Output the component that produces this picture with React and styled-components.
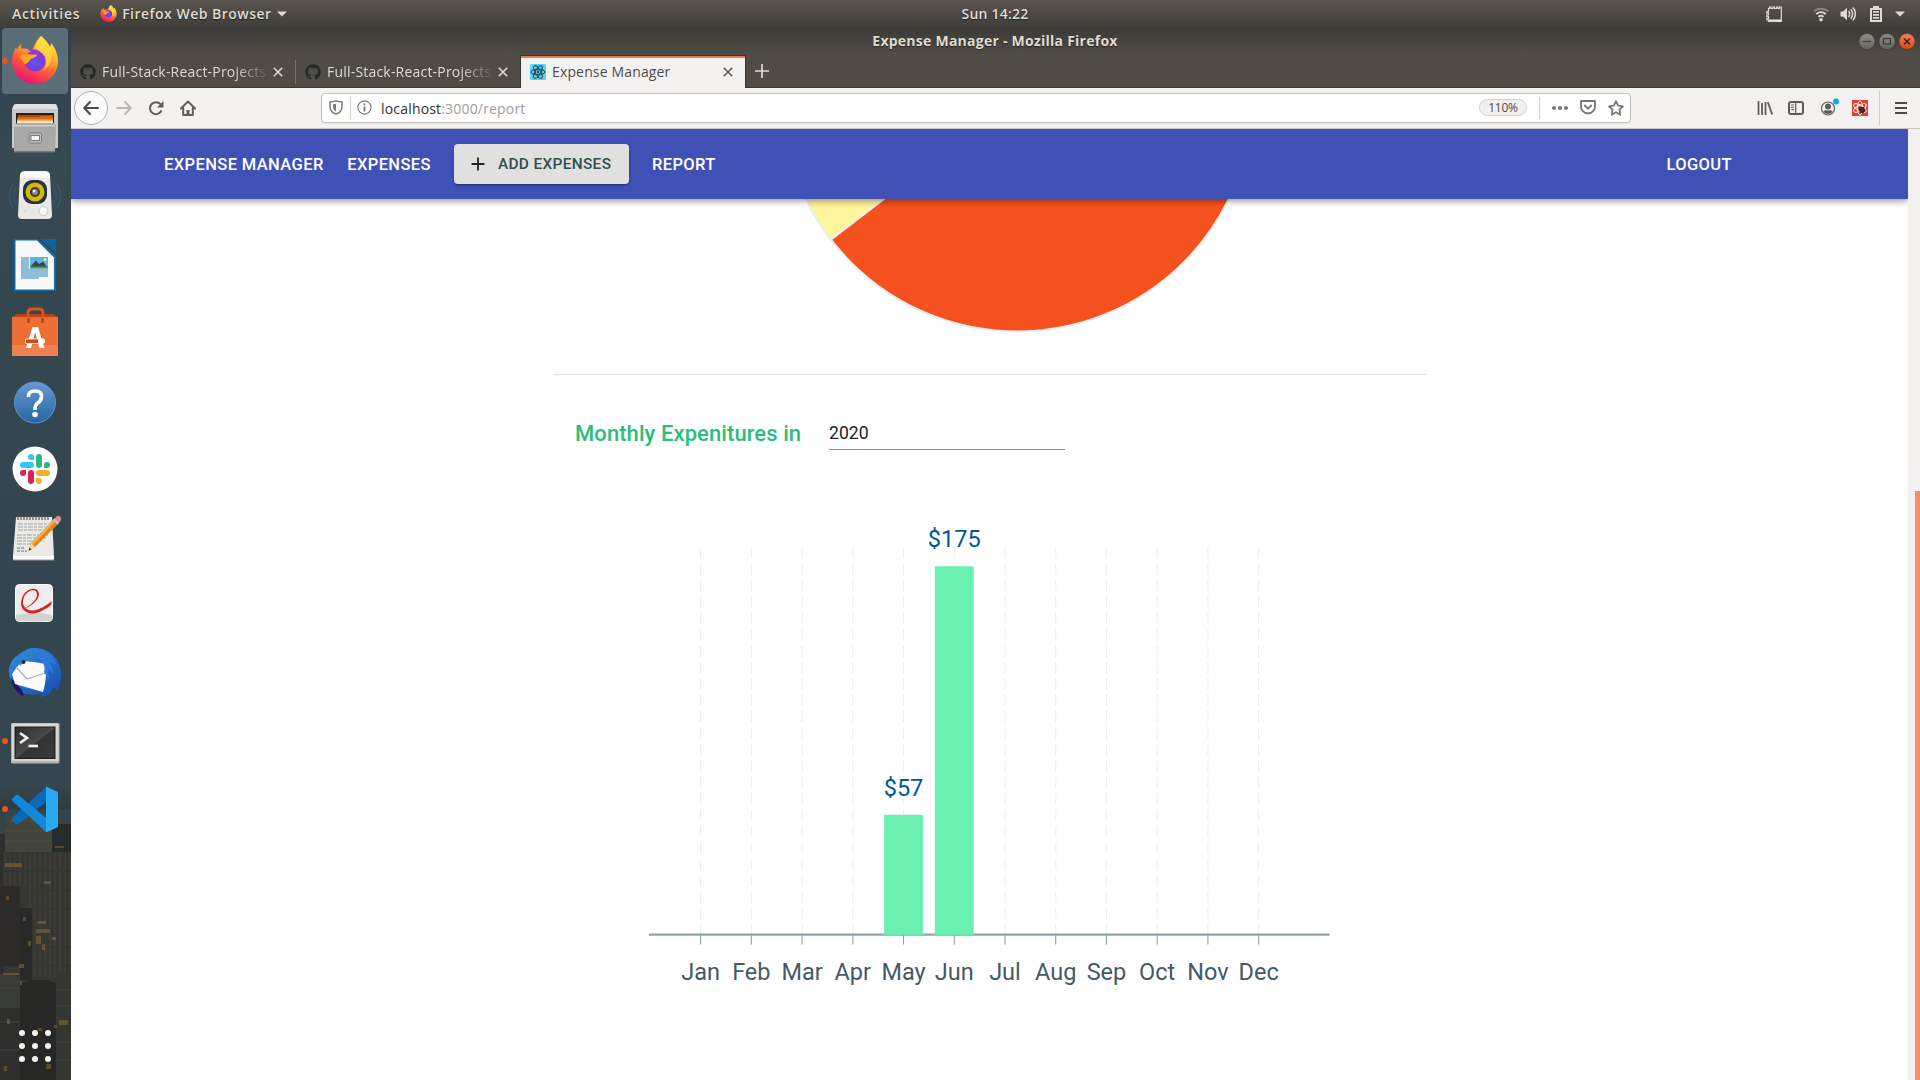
import React from "react";
import styled, { createGlobalStyle } from "styled-components";
import { FaGithub } from "react-icons/fa";

const GlobalStyle = createGlobalStyle`
  * { box-sizing: border-box; }
  html, body { margin: 0; padding: 0; overflow: hidden; background: #fff; }
  svg { display: block; flex: none; }
`;

const ui = `"Open Sans", "Noto Sans", sans-serif`;

const Desktop = styled.div`
  width: 1920px;
  height: 1080px;
  display: flex;
  flex-direction: column;
  overflow: hidden;
  font-family: ${ui};
`;

/* ---------- system panel ---------- */
const Panel = styled.header`
  height: 27px;
  flex: none;
  display: grid;
  grid-template-columns: 955px 80px 1fr;
  align-items: center;
  background: linear-gradient(#5a564e, #3f3e39);
  color: #dfdbd2;
`;
const PanelSide = styled.div`
  display: flex;
  align-items: center;
  height: 27px;
  justify-content: ${(p) => (p.$end ? "flex-end" : "flex-start")};
  padding: ${(p) => (p.$end ? "0 15px 0 0" : "0 0 0 12px")};
`;
const PanelText = styled.span`
  font-size: 14px;
  font-weight: 600;
  line-height: 26px;
  white-space: nowrap;
  letter-spacing: ${(p) => p.$ls || 0}px;
  margin-left: ${(p) => p.$ml || 0}px;
  margin-right: ${(p) => p.$gap || 0}px;
  text-align: center;
  text-shadow: 0 1px 1px rgba(0, 0, 0, 0.5);
`;
const IconSlot = styled.span`
  display: flex;
  flex: none;
  align-items: center;
  justify-content: center;
  width: ${(p) => p.$w}px;
  margin-left: ${(p) => p.$ml || 0}px;
`;

const Workspace = styled.div`
  flex: 1;
  display: flex;
  min-height: 0;
`;

/* ---------- dock ---------- */
const Dock = styled.nav`
  position: relative;
  width: 71px;
  flex: none;
  display: flex;
  flex-direction: column;
  background: linear-gradient(#2f424c, #364850 12%, #33464f 55%, #35464e 72%, #2c2d2b 77%, #292a29);
`;
const DockPhoto = styled.div`
  position: absolute;
  left: 0;
  bottom: 0;
`;
const DockItem = styled.div`
  position: relative;
  height: 68px;
  flex: none;
`;
const DockTile = styled.div`
  position: absolute;
  left: 2px;
  top: 1px;
  width: 66px;
  height: 66px;
  border-radius: 4px;
  background: rgba(150, 170, 178, 0.42);
`;
const Running = styled.i`
  position: absolute;
  left: 2px;
  top: 31px;
  width: 6px;
  height: 6px;
  border-radius: 50%;
  background: #e95420;
`;
const DockArt = styled.div`
  position: relative;
`;
const AppGrid = styled.div`
  position: relative;
  margin: auto 0 18px 19px;
  display: grid;
  grid-template-columns: repeat(3, 6px);
  gap: 7px;
`;
const GridDot = styled.i`
  width: 6px;
  height: 6px;
  border-radius: 50%;
  background: #f2f2f0;
`;

/* ---------- browser ---------- */
const Browser = styled.section`
  flex: 1;
  min-width: 0;
  display: flex;
  flex-direction: column;
`;
const TitleBar = styled.div`
  height: 28px;
  flex: none;
  display: flex;
  align-items: center;
  padding: 0 5px 0 0;
  background: linear-gradient(#3a3935, #504c45 96%);
  color: #dfdbd2;
`;
const TitleText = styled.div`
  flex: 1;
  font-size: 14px;
  font-weight: 700;
  line-height: 28px;
  text-align: center;
  padding-left: 60px;
  letter-spacing: ${(p) => p.$ls}px;
  text-shadow: 0 1px 1px rgba(0, 0, 0, 0.5);
`;
const WinButtons = styled.div`
  display: flex;
  gap: 4px;
`;
const TabStrip = styled.div`
  height: 33px;
  flex: none;
  display: flex;
  background: #504c45;
  border-bottom: 1px solid #38362f;
`;
const Tab = styled.div`
  position: relative;
  width: ${(p) => p.$w}px;
  height: ${(p) => (p.$active ? 33 : 32)}px;
  display: flex;
  align-items: center;
  padding: 1px 11px 0 9px;
  color: ${(p) => (p.$active ? "#4c4c4c" : "#dfdbd2")};
  background: ${(p) => (p.$active ? "#f4f2f1" : "transparent")};
  ${(p) => p.$active && `border: 1px solid #38362f; border-bottom: 0; box-shadow: inset 0 2px #f07746; padding: 0 10px 0 9px;`}
`;
const TabLine = styled.i`
  width: 1px;
  height: 24px;
  margin-top: 5px;
  background: #77736a;
`;
const TabLabel = styled.span`
  width: 165px;
  margin-left: 6px;
  margin-right: 6px;
  font-size: 14px;
  line-height: 20px;
  letter-spacing: ${(p) => p.$ls || 0}px;
  white-space: nowrap;
  overflow: hidden;
  ${(p) => p.$fade && "mask-image: linear-gradient(to right, #000 132px, transparent 168px);"}
`;
const Toolbar = styled.div`
  height: 41px;
  flex: none;
  display: flex;
  align-items: center;
  padding: 0 0 1px 3px;
  background: #f4f2f1;
  border-bottom: 1px solid #c6c3bf;
`;
const BackButton = styled.div`
  width: 34px;
  height: 34px;
  display: flex;
  align-items: center;
  justify-content: center;
  border: 1px solid #b0aeab;
  border-radius: 50%;
  background: #fbfafa;
`;
const UrlBar = styled.div`
  width: 1310px;
  height: 30px;
  margin-left: 117px;
  padding-right: 6px;
  display: flex;
  align-items: center;
  background: #fff;
  border: 1px solid #c4c1bd;
  border-radius: 4px;
  box-shadow: 0 1px 2px rgba(0, 0, 0, 0.06);
`;
const Rule = styled.i`
  width: 1px;
  flex: none;
  height: ${(p) => p.$h}px;
  background: #cfccc9;
`;
const UrlText = styled.span`
  flex: 1;
  margin-left: 9px;
  padding-top: 1px;
  font-size: 14px;
  letter-spacing: 0.18px;
  color: #a09d99;
`;
const UrlHost = styled.span`
  color: #333;
`;
const Zoom = styled.span`
  width: 48px;
  height: 17px;
  margin-right: 12px;
  border: 1px solid #d2d0ce;
  border-radius: 9px;
  background: #f1f0ef;
  color: #4a4a4a;
  font-size: 12px;
  letter-spacing: -0.2px;
  line-height: 15px;
  text-align: center;
`;

/* ---------- page ---------- */
const Viewport = styled.div`
  flex: 1;
  display: flex;
  min-height: 0;
`;
const Page = styled.main`
  flex: 1;
  display: flex;
  flex-direction: column;
  background: #fff;
  overflow: hidden;
  font-family: Roboto, sans-serif;
`;
const ScrollTrack = styled.div`
  width: 12px;
  flex: none;
  padding: 362px 0 0 7px;
  background: #f1f0ee;
`;
const ScrollThumb = styled.div`
  height: 100%;
  background: #f58d67;
`;
const AppBar = styled.header`
  position: relative;
  z-index: 1;
  height: 70px;
  flex: none;
  display: flex;
  align-items: center;
  padding: 0 176px 0 93px;
  background: #3f51b5;
  box-shadow: 0 2px 4px -1px rgba(0, 0, 0, 0.2), 0 4px 5px 0 rgba(0, 0, 0, 0.14), 0 1px 10px 0 rgba(0, 0, 0, 0.12);
`;
const NavLink = styled.a`
  color: #fff;
  font-size: 16.5px;
  font-weight: 500;
  letter-spacing: 0.39px;
  line-height: 29px;
  white-space: nowrap;
  margin-right: ${(p) => p.$mr || 0}px;
  margin-left: ${(p) => p.$ml || 0};
`;
const AddButton = styled.button`
  width: 175px;
  height: 40px;
  margin-right: 23px;
  padding: 0 0 0 13px;
  display: flex;
  align-items: center;
  gap: 9px;
  border: 0;
  border-radius: 4px;
  background: #e0e0e0;
  color: #2f4f4f;
  font: 500 15.4px Roboto, sans-serif;
  letter-spacing: 0.34px;
  white-space: nowrap;
  box-shadow: 0 3px 1px -2px rgba(0, 0, 0, 0.2), 0 2px 2px 0 rgba(0, 0, 0, 0.14), 0 1px 5px 0 rgba(0, 0, 0, 0.12);
`;
const Report = styled.div`
  width: 874px;
  margin: 0 auto;
`;
const Divider = styled.hr`
  height: 1px;
  margin: 0;
  border: 0;
  background: #e0e0e0;
`;
const YearRow = styled.div`
  display: flex;
  align-items: flex-start;
  height: 125px;
  padding: 41px 0 0 22.5px;
`;
const Heading = styled.h2`
  width: 254px;
  margin: 0;
  font-size: 22px;
  line-height: 35px;
  font-weight: 500;
  letter-spacing: 0.08px;
  color: #2bbd7e;
  white-space: nowrap;
`;
const YearField = styled.div`
  width: 236px;
  height: 34px;
  border-bottom: 1px solid #8e8e8e;
  font-size: 17.6px;
  line-height: 34px;
  color: #212121;
`;

/* ---------- small icons ---------- */
const FirefoxArt = () => (
  <>
    <defs>
      <linearGradient id="fxA" x1="0.8" y1="0" x2="0.3" y2="1">
        <stop offset="0" stopColor="#fff44f" />
        <stop offset="0.35" stopColor="#ffb02e" />
        <stop offset="0.62" stopColor="#ff5b36" />
        <stop offset="1" stopColor="#e5107c" />
      </linearGradient>
      <radialGradient id="fxB" cx="0.5" cy="0.55" r="0.6">
        <stop offset="0" stopColor="#5b5cf0" />
        <stop offset="0.6" stopColor="#7a3ce0" />
        <stop offset="1" stopColor="#a032d8" />
      </radialGradient>
      <linearGradient id="fxC" x1="0" y1="0" x2="1" y2="0.6">
        <stop offset="0" stopColor="#ff8a1c" />
        <stop offset="1" stopColor="#ffbd2e" />
      </linearGradient>
    </defs>
    <path d="M29 0C33 3 36 7 38 11C39 9 39 8 39 7C43 11 46 19 46 25C46 38 36 48 23 48C10 48 0 38 0 25C0 20 2 15 4 11L5 14C6 11 8 9 9 8C9 10 9 12 10 13C13 12 17 13 19 15C22 13 22 7 29 0Z" fill="url(#fxA)" />
    <circle cx="23" cy="25" r="10.5" fill="url(#fxB)" />
    <path d="M15 14C22 11 31 15 32 22C29 18 26 18 24 19C21 14 17 15 15 14Z" fill="#9a35dc" />
    <path d="M7 21C9 18 14 18 18 18.5C21 19 24 18 25 19C24 22 19 22 18 24C16 26 15 28 12.500 28C11 25 9 23 7 21Z" fill="url(#fxC)" />
    <path d="M29 0C22 7 24 14 30 17C36 21 36 30 30 35C40 31 42 18 38 11C36 7 33 3 29 0Z" fill="#ffdc3d" opacity="0.75" />
  </>
);

const FirefoxSmall = () => (
  <svg width="17" height="17" viewBox="-1 0 48 48"><FirefoxArt /></svg>
);
const Triangle = () => (
  <svg width="10" height="6" viewBox="0 0 10 6"><path d="M0 0.500H10L5 5.500Z" fill="#dfdbd2" /></svg>
);
const Close = ({ color }) => (
  <svg width="10" height="10" viewBox="0 0 10 10"><path d="M0.800 0.800L9.200 9.200M9.200 0.800L0.800 9.200" stroke={color} strokeWidth="1.600" /></svg>
);
const ReactAtom = ({ stroke, sw = 1 }) => (
  <g fill="none" stroke={stroke} strokeWidth={sw}>
    {[0, 60, 120].map((a) => (
      <ellipse key={a} cx="8" cy="8" rx="7" ry="2.700" transform={`rotate(${a} 8 8)`} />
    ))}
    <circle cx="8" cy="8" r="1.200" fill={stroke} stroke="none" />
  </g>
);

const PanelTray = () => (
  <PanelSide $end>
    <IconSlot $w={18}>
      <svg width="18" height="18" viewBox="0 0 18 18" fill="none" stroke="#dfdbd2" strokeWidth="1.200">
        <path d="M4.500 3.500V2H6V3.500H8V2H9.500V3.500H11.500V2H13V3.500H14.500V2H16.300V16.400H3.500V15H1.800V13.400H3.500V11.500H1.800V10H3.500V8.200H1.800V6.600H3.500V3.500Z" />
        <path d="M3.500 15.500H16.300" strokeWidth="2.200" />
      </svg>
    </IconSlot>
    <IconSlot $w={16} $ml={30}>
      <svg width="16" height="16" viewBox="0 0 16 16" fill="none" stroke="#dfdbd2" strokeWidth="1.900">
        <path d="M1 5.500C4.500 1.800 11.500 1.800 15 5.500" opacity="0.4" />
        <path d="M3.300 8.200C6 5.400 10 5.400 12.700 8.200" />
        <path d="M5.500 10.900C7 9.400 9 9.400 10.500 10.900" />
        <circle cx="8" cy="13.700" r="1.800" fill="#dfdbd2" stroke="none" />
      </svg>
    </IconSlot>
    <IconSlot $w={16} $ml={11}>
      <svg width="16" height="16" viewBox="0 0 16 16" fill="none" stroke="#dfdbd2" strokeWidth="1.500">
        <path d="M0.500 5.500H3L7 1.800V14.200L3 10.500H0.500Z" fill="#dfdbd2" stroke="none" />
        <path d="M8.500 5C10 6.500 10 9.500 8.500 11M10.700 3.300C13.200 5.800 13.200 10.200 10.700 12.700M12.800 1.500C16.200 5 16.200 11 12.800 14.500" />
      </svg>
    </IconSlot>
    <IconSlot $w={12} $ml={14}>
      <svg width="12" height="16" viewBox="0 0 12 16">
        <path d="M3 0H9V2H12V16H0V2H3Z" fill="#dfdbd2" />
        <path d="M2 4H10V14H2Z" fill="#4a4842" />
        <path d="M3 5H9V6.800H3ZM3 8H9V9.800H3ZM3 11H9V12.800H3Z" fill="#dfdbd2" />
      </svg>
    </IconSlot>
    <IconSlot $w={10} $ml={13}><Triangle /></IconSlot>
  </PanelSide>
);

const WindowButton = ({ kind }) => {
  const close = kind === "close";
  return (
    <svg width="16" height="17" viewBox="0 0 16 17">
      <defs>
        <linearGradient id={`wb-${kind}`} x1="0" y1="0" x2="0" y2="1">
          <stop offset="0" stopColor={close ? "#f58260" : "#8f8c84"} />
          <stop offset="1" stopColor={close ? "#dd4814" : "#66645d"} />
        </linearGradient>
      </defs>
      <circle cx="8" cy="8.500" r="8" fill={`url(#wb-${kind})`} stroke="#33322e" strokeWidth="0.500" />
      <g fill="none" stroke={close ? "#4b2010" : "#3a3935"} strokeWidth="1.200">
        {kind === "min" && <path d="M4 8.500H12" />}
        {kind === "max" && <rect x="4.500" y="5.500" width="7" height="5.500" />}
        {close && <path d="M5 5.500L11 11.500M11 5.500L5 11.500" strokeWidth="1.500" />}
      </g>
    </svg>
  );
};

/* ---------- dock drawings (71 x 68 cells) ---------- */
const dockArt = {
  firefox: <g transform="translate(12 9)"><FirefoxArt /></g>,
  files: (
    <>
      <path d="M14 10Q15 9 17 9H54Q56 9 56.500 10L58 15V53H12V15Z" fill="#c9c9c9" />
      <path d="M14 10Q15 9 17 9H54Q56 9 56.500 10L58 14H12Z" fill="#e2e2e2" />
      <path d="M16 18H54V30H16Z" fill="#2c1d14" />
      <path d="M18 20H53V23H18Z" fill="#a8480f" />
      <path d="M17.500 22H40V21H53V25H17.500Z" fill="#d9691e" />
      <path d="M17 24.500H53V28H17Z" fill="#f3b56b" />
      <path d="M17 26.500H53V28H17Z" fill="#fff1d8" />
      <path d="M14 30L17 28H54L56 30L55 57H14Z" fill="#a9a9a9" />
      <path d="M14 30H55V31.500H14Z" fill="#cfcfcf" />
      <path d="M14 56H55V57.500H14Z" fill="#777" />
      <rect x="29" y="38" width="12.500" height="10" rx="1.500" fill="#bdbdbd" stroke="#7d7d7d" />
      <rect x="31" y="40.500" width="8.500" height="5" fill="#f4f4f4" stroke="#666" strokeWidth="0.800" />
    </>
  ),
  music: (
    <>
      <g fill="none" stroke="#3f6e9c" strokeWidth="2" opacity="0.32">
        <path d="M14 20C8 28 8 38 14 46M56 20C62 28 62 38 56 46" />
        <path d="M17 23C13 29 13 37 17 43M53 23C57 29 57 37 53 43" opacity="0.8" />
      </g>
      <path d="M20 11Q21 8 25 8H45Q49 8 50 11L52 52Q52 56 48 56H22Q18 56 18 52Z" fill="#e9e9e7" />
      <path d="M21 11Q22 8.500 25 8.500H45Q48 8.500 49 11L49.500 15H20.500Z" fill="#fafafa" />
      <rect x="23" y="17" width="24" height="24" rx="9" fill="#27323a" />
      <circle cx="35" cy="29" r="9.500" fill="#d6b70e" />
      <circle cx="35" cy="29" r="5" fill="#3c3c22" />
      <circle cx="35" cy="29" r="3" fill="#8c8c8c" />
      <circle cx="34" cy="28" r="1.200" fill="#fff" />
      <circle cx="43.500" cy="48" r="4.500" fill="#f7f7f7" stroke="#c8c8c8" />
      <circle cx="25" cy="48" r="1.500" fill="#dcdcdc" />
    </>
  ),
  writer: (
    <>
      <path d="M14 8H38L56 25V60H14Z" fill="#0e6aa8" />
      <path d="M15.500 9.500H37L54 26.500V58.500H15.500Z" fill="#f8f8f8" />
      <path d="M40 8H56V22Z" fill="#0a62a0" />
      <g stroke="#3a8cc0" strokeWidth="1.100">
        {[27, 29, 31, 33, 35, 37].map((y) => <path key={y} d={`M21 ${y}H29`} />)}
        {[39, 41, 43, 45].map((y) => <path key={y} d={`M21 ${y}H48`} />)}
        <path d="M21 47H39" />
      </g>
      <rect x="30" y="26" width="18" height="11.500" fill="#5db5e8" />
      <path d="M31 35L36 29.500L39 33L43 30.500L47 36H31Z" fill="#3b474d" />
      <path d="M30 35.500H48V37.500H30Z" fill="#4f9a58" />
      <circle cx="45" cy="28.500" r="1.500" fill="#ffe14d" />
    </>
  ),
  software: (
    <g transform="translate(0 1)">
      <path d="M12 17L17 14H53L58 17V24H12Z" fill="#b8431a" />
      <path d="M28 21V13Q28 9 32 9H39Q43 9 43 13V21" fill="none" stroke="#d8531d" strokeWidth="3" />
      <path d="M12 17H58V56H12Z" fill="#ee6f33" />
      <path d="M12 45H58V56H12Z" fill="#f28150" />
      <path d="M27 18H30V23H27ZM41 18H44V23H41Z" fill="#c64a18" />
      <path d="M32.500 27H38L44.500 48H39.500L35.200 32L31 48H26Z" fill="#fff" />
      <path d="M25.500 39H40V43.500H25.500Z" fill="#c94b23" stroke="#fff" strokeWidth="0.800" />
      <rect x="38" y="38.600" width="7" height="5.200" rx="2" fill="#fff" />
    </g>
  ),
  help: (
    <>
      <defs><linearGradient id="hlp" x1="0" y1="0" x2="0" y2="1"><stop offset="0" stopColor="#6a98d2" /><stop offset="1" stopColor="#2766a2" /></linearGradient></defs>
      <circle cx="35" cy="35.500" r="20.500" fill="url(#hlp)" stroke="#5f95cf" />
      <path d="M28.500 30Q28 24 35 24Q42 24 41.500 30Q41 34 37 36.500Q35 38.500 35 43" fill="none" stroke="#fff" strokeWidth="3.600" />
      <circle cx="35" cy="47.500" r="2.800" fill="#fff" />
    </>
  ),
  slack: (
    <>
      <circle cx="35" cy="34" r="22.500" fill="#fff" />
      <g fill="#36c5f0"><rect x="20" y="27" width="14" height="6" rx="3" /><path d="M34 25V22A3 3 0 1 0 31 25Z" /></g>
      <g fill="#2eb67d"><rect x="36" y="19" width="6" height="14" rx="3" /><path d="M44 33H47A3 3 0 1 0 44 30Z" /></g>
      <g fill="#ecb22e"><rect x="36" y="35" width="14" height="6" rx="3" /><path d="M36 43V46A3 3 0 1 0 39 43Z" /></g>
      <g fill="#e01e5a"><rect x="28" y="35" width="6" height="14" rx="3" /><path d="M26 35H23A3 3 0 1 0 26 38Z" /></g>
    </>
  ),
  notes: (
    <>
      <path d="M16 14H52L54 54V57H13V53Z" fill="#e9e9e6" />
      <path d="M13 53H54V56.500H13Z" fill="#fff" />
      <path d="M13 56.500H54V57.500H13Z" fill="#9a9a98" />
      <path d="M18 12V17M21 12V17M24 12V17M27 12V17M30 12V17M33 12V17M36 12V17M39 12V17M42 12V17M45 12V17M48 12V17" stroke="#555" strokeWidth="1.200" />
      <g stroke="#a5a5a3" strokeWidth="1" strokeDasharray="5 1 3 1">
        <path d="M18 21H48M18 24H46M18 27H42M17 32H48M17 35H46M17 38H44M17 41H38" />
      </g>
      <path d="M17 45H24M17 48H27" stroke="#666" fill="none" strokeWidth="0.900" strokeDasharray="3 1" />
      <path d="M29 47L31 40L54 16L58.500 20.500L35 44Z" fill="#dc861c" />
      <path d="M31 40L54 16L56 18L33 42Z" fill="#f4b145" />
      <path d="M29 47L31 40L35 44Z" fill="#ecd9b0" />
      <path d="M28.500 47.800L29.500 44.500L31.500 46.500Z" fill="#333" />
      <path d="M54 16L56.500 13.500Q59 12 60.500 14Q62 16 60.500 18L58.500 20.500Z" fill="#dd8a8a" />
      <path d="M53 17L54.500 15.500L59 20L57.500 21.500Z" fill="#c9ccd0" />
    </>
  ),
  evince: (
    <g transform="translate(0 4)">
      <rect x="15.500" y="9.500" width="37" height="37" rx="4" fill="#ededed" stroke="#fff" />
      <path d="M16 40Q34 36 52 40V46Q34 47.500 16 46Z" fill="#d2d2d2" />
      <path d="M18 36C29 32 37 26 37 19.500C37 13 28 14 24 22C20 31 27 36 33 35.500C39 35 46 31 52 26L51 30C46 34 39 38 33 38.500C25 38.500 18.500 33 22 23C25 13 38 10 39 19C39 27 28 33 18 36Z" fill="#d81e1e" />
    </g>
  ),
  thunderbird: (
    <g transform="translate(0 1)">
      <defs><linearGradient id="tb" x1="0" y1="0" x2="1" y2="1"><stop offset="0" stopColor="#2f8fe0" /><stop offset="1" stopColor="#1b49b0" /></linearGradient></defs>
      <path d="M18 15C24 11 26 9 32 8C48 7 60 18 61 32C62 41 59 45 58 50L53 48C51 54 46 56 40 57L42 53C30 58 14 52 10 38C7 30 10 20 18 15Z" fill="url(#tb)" />
      <path d="M11 38C12 48 19 55 24 56L22 50Z" fill="#241467" />
      <path d="M12 34L20 23C26 20 34 22 45 24C47 32 46 42 43 52L15 44Z" fill="#fbfbfb" />
      <path d="M16 27L27 39L45 33" fill="none" stroke="#b0b0b0" strokeWidth="1.200" />
      <path d="M18 22C20 10 31 6 38 10C36 16 27 17 20 26Z" fill="#2e80cf" />
      <path d="M38 10C48 10 54 17 56 25L50 22L54 34L48 28L49 40L44 32C46 26 43 20 33 15Z" fill="#2d78d8" />
      <circle cx="23.500" cy="22" r="2" fill="#1c2a44" />
    </g>
  ),
  terminal: (
    <>
      <defs><linearGradient id="tm" x1="0" y1="0" x2="1" y2="1"><stop offset="0" stopColor="#2a2a2a" /><stop offset="0.500" stopColor="#4a4a4a" /><stop offset="0.520" stopColor="#333" /><stop offset="1" stopColor="#3a3a3a" /></linearGradient></defs>
      <rect x="11" y="16" width="48.500" height="40.500" rx="1.500" fill="#b4b4b2" />
      <rect x="12" y="16.500" width="46.500" height="37.500" rx="1" fill="#d6d6d4" />
      <rect x="15" y="20" width="40" height="31.500" fill="url(#tm)" stroke="#1c1c1c" />
      <path d="M20 26L27 31L20 36" fill="none" stroke="#f1f1f1" strokeWidth="2.600" />
      <path d="M28.500 39H38" stroke="#f1f1f1" strokeWidth="2.600" />
    </>
  ),
  code: (
    <>
      <path d="M12 45L16 49Q17 50 18.500 49L46 27V12L13 42Q11.500 43.500 12 45Z" fill="#0a6ab6" />
      <path d="M12 24L16 20Q17 19.500 18.500 20L46 43V57L13 26.500Q11.500 25.500 12 24Z" fill="#1488d8" />
      <path d="M46 11.500L57 16.500Q58 17 58 18V51Q58 52 57 52.500L46 57.500Z" fill="#29a9f2" />
    </>
  ),
};
const dockApps = [
  { id: "firefox", running: true, focused: true },
  { id: "files" }, { id: "music" }, { id: "writer" }, { id: "software" }, { id: "help" },
  { id: "slack" }, { id: "notes" }, { id: "evince" }, { id: "thunderbird" },
  { id: "terminal", running: true }, { id: "code", running: true },
];

const litWindows = [
  [5, 53, 17, 4], [55, 36, 9, 2], [44, 71, 7, 3], [6, 86, 3, 4], [23, 107, 3, 4], [28, 131, 3, 5], [37, 111, 9, 3],
  [36, 119, 14, 4], [36, 126, 5, 8], [42, 134, 3, 6], [52, 127, 4, 3], [19, 154, 5, 4], [3, 163, 16, 2], [20, 171, 2, 4],
  [7, 209, 3, 5], [38, 218, 4, 3], [59, 210, 9, 5], [4, 256, 3, 5], [46, 254, 5, 5], [54, 215, 3, 3],
];
const CityPhoto = () => (
  <svg width="71" height="270" viewBox="0 0 71 270">
    <rect y="22" width="71" height="248" fill="#2e2f2c" />
    <rect y="0" width="71" height="24" fill="#35444a" />
    <rect x="5" y="5" width="47" height="38" fill="#424439" />
    <path d="M5 11H52M5 21H52M5 31H52" stroke="#515146" strokeWidth="0.800" />
    <rect x="52" y="14" width="19" height="28" fill="#262b2b" />
    <rect x="3" y="42" width="68" height="130" fill="#353531" />
    {Array.from({ length: 14 }, (_, i) => (
      <path key={i} d={`M${5 + i * 5} 43V${i < 5 ? 76 : 168}`} stroke="#48463f" strokeWidth="1.400" strokeDasharray="17 2" opacity="0.55" />
    ))}
    <rect y="76" width="20" height="80" fill="#2c2b2a" />
    <rect x="20" y="98" width="12" height="72" fill="#292a28" />
    <rect y="164" width="20" height="34" fill="#383a38" />
    <path d="M20 174L30 170H48L56 174V270H20Z" fill="#272826" />
    <rect x="56" y="162" width="15" height="108" fill="#333631" />
    <path d="M57 180H71M57 196H71M57 212H71M57 232H71M57 250H71M0 178H20M0 212H20M0 240H20" stroke="#404340" />
    <g fill="#a5792e" opacity="0.42">
      {litWindows.map(([x, y, w, h]) => <rect key={`${x}-${y}`} x={x} y={y} width={w} height={h} />)}
    </g>
  </svg>
);

/* ---------- charts ---------- */
const months = ["Jan", "Feb", "Mar", "Apr", "May", "Jun", "Jul", "Aug", "Sep", "Oct", "Nov", "Dec"];
const spend = [
  { month: 4, label: "$57", top: 814.8 },
  { month: 5, label: "$175", top: 566.3 },
];
const mx = (i) => 700.6 + i * 50.73;

const PieChart = () => (
  <svg width="874" height="175" viewBox="553 199 874 175">
    <g stroke="#eceff1" strokeWidth="2">
      <circle cx="1017.300" cy="96.500" r="235" fill="#f4511e" />
      <path d="M1017.300 96.500L831 239.700A235 235 0 0 1 782.300 96.500Z" fill="#fff59d" />
    </g>
  </svg>
);
const MonthlyChart = () => (
  <svg width="874" height="500" viewBox="553 500 874 500" fontFamily="Roboto, sans-serif" fontSize="23.500" textAnchor="middle">
    {months.map((m, i) => (
      <g key={m}>
        <path d={`M${mx(i)} 547V934`} stroke="#eceff1" strokeWidth="1.100" strokeDasharray="11.600 4.800" />
        <path d={`M${mx(i)} 935V944.500`} stroke="#90a4ae" strokeWidth="1.100" />
        <text x={mx(i)} y="979.700" fill="#455a64">{m}</text>
      </g>
    ))}
    <path d="M649 934.700H1329.500" stroke="#90a4ae" strokeWidth="2.200" />
    {spend.map((s) => (
      <g key={s.label}>
        <rect x={mx(s.month) - 19.4} y={s.top} width="38.800" height={934.9 - s.top} fill="#69f0ae" />
        <text x={mx(s.month)} y={s.top - 18.9} fill="#01579b">{s.label}</text>
      </g>
    ))}
  </svg>
);

const gray = "#5f5e5c";

export default function App() {
  return (
    <Desktop>
      <GlobalStyle />
      <Panel>
        <PanelSide>
          <PanelText $ls={0.68} $gap={20}>Activities</PanelText>
          <FirefoxSmall />
          <PanelText $ls={0.48} $ml={5} $gap={5}>Firefox Web Browser</PanelText>
          <Triangle />
        </PanelSide>
        <PanelText $ls={0.2}>Sun 14:22</PanelText>
        <PanelTray />
      </Panel>

      <Workspace>
        <Dock>
          <DockPhoto><CityPhoto /></DockPhoto>
          {dockApps.map((a) => (
            <DockItem key={a.id}>
              {a.focused && <DockTile />}
              <DockArt><svg width="71" height="68" viewBox="0 0 71 68">{dockArt[a.id]}</svg></DockArt>
              {a.running && <Running />}
            </DockItem>
          ))}
          <AppGrid>{Array.from({ length: 9 }, (_, i) => <GridDot key={i} />)}</AppGrid>
        </Dock>

        <Browser>
          <TitleBar>
            <TitleText $ls={0.25}>Expense Manager - Mozilla Firefox</TitleText>
            <WinButtons>
              <WindowButton kind="min" /><WindowButton kind="max" /><WindowButton kind="close" />
            </WinButtons>
          </TitleBar>

          <TabStrip>
            <Tab $w={224}>
              <FaGithub size={16} color="#24292e" />
              <TabLabel $fade $ls={0.2}>Full-Stack-React-Projects</TabLabel>
              <Close color="#dfdbd2" />
            </Tab>
            <TabLine />
            <Tab $w={224}>
              <FaGithub size={16} color="#24292e" />
              <TabLabel $fade $ls={0.2}>Full-Stack-React-Projects</TabLabel>
              <Close color="#dfdbd2" />
            </Tab>
            <Tab $w={226} $active>
              <svg width="16" height="16" viewBox="0 0 16 16">
                <rect width="16" height="16" rx="1.500" fill="#53d3f5" />
                <ReactAtom stroke="#23343c" sw={0.9} />
              </svg>
              <TabLabel $ls={0.15}>Expense Manager</TabLabel>
              <Close color="#5f5e5c" />
            </Tab>
            <IconSlot $w={14} $ml={9}>
              <svg width="14" height="14" viewBox="0 0 14 14"><path d="M7 0V14M0 7H14" stroke="#dfdbd2" strokeWidth="1.700" /></svg>
            </IconSlot>
          </TabStrip>

          <Toolbar>
            <BackButton>
              <svg width="16" height="16" viewBox="0 0 16 16" fill="none" stroke="#4c4b49" strokeWidth="2" strokeLinecap="round" strokeLinejoin="round"><path d="M15 8H1.500M7 2L1.200 8L7 14" /></svg>
            </BackButton>
            <IconSlot $w={32}>
              <svg width="16" height="16" viewBox="0 0 16 16" fill="none" stroke="#b9b7b4" strokeWidth="1.900" strokeLinecap="round" strokeLinejoin="round"><path d="M1 8H14.500M9 2L14.800 8L9 14" /></svg>
            </IconSlot>
            <IconSlot $w={32}>
              <svg width="16" height="16" viewBox="0 0 16 16" fill="none" stroke={gray} strokeWidth="2"><path d="M13.500 10.500A6 6 0 1 1 12.500 4.200" /><path d="M15.500 1V7.500H9Z" fill={gray} stroke="none" /></svg>
            </IconSlot>
            <IconSlot $w={32}>
              <svg width="16" height="16" viewBox="0 0 16 16" fill="none" stroke={gray} strokeWidth="2" strokeLinejoin="round" strokeLinecap="round"><path d="M1 8.500L8 1.500L15 8.500M3.200 8V15H12.800V8" /><path d="M6.500 15V10H9.500V15Z" fill={gray} stroke="none" /></svg>
            </IconSlot>
            <UrlBar>
              <IconSlot $w={16} $ml={6}>
                <svg width="14" height="15" viewBox="0 0 14 15" fill="none" stroke="#7a7977" strokeWidth="1.500"><path d="M7 0.900C9 1.700 11 2 13 2V6.500C13 10.500 10 13 7 14C4 13 1 10.500 1 6.500V2C3 2 5 1.700 7 0.900Z" /><path d="M7 3.700V11.500C5 10.500 4 9 4 6.500V4.300C5 4.300 6 4.100 7 3.700Z" fill="#7a7977" stroke="none" /></svg>
              </IconSlot>
              <IconSlot $w={13}><Rule $h={22} /></IconSlot>
              <IconSlot $w={15}>
                <svg width="15" height="15" viewBox="0 0 15 15" fill="none" stroke="#7a7977" strokeWidth="1.200"><circle cx="7.500" cy="7.500" r="6.600" /><path d="M7.500 6.500V11.500M7.500 3.400V5.200" strokeWidth="1.900" /></svg>
              </IconSlot>
              <UrlText><UrlHost>localhost</UrlHost>:3000/report</UrlText>
              <Zoom>110%</Zoom>
              <Rule $h={22} />
              <IconSlot $w={16} $ml={12}>
                <svg width="16" height="4" viewBox="0 0 16 4" fill="#777674"><circle cx="2" cy="2" r="2" /><circle cx="8" cy="2" r="2" /><circle cx="14" cy="2" r="2" /></svg>
              </IconSlot>
              <IconSlot $w={16} $ml={12}>
                <svg width="16" height="15" viewBox="0 0 16 15" fill="none" stroke="#777674" strokeWidth="1.800" strokeLinecap="round" strokeLinejoin="round"><path d="M1 1H15V6.500A7 7 0 0 1 1 6.500Z" /><path d="M4.800 5.500L8 8.600L11.200 5.500" /></svg>
              </IconSlot>
              <IconSlot $w={16} $ml={12}>
                <svg width="16" height="16" viewBox="0 0 16 16" fill="none" stroke="#777674" strokeWidth="1.700" strokeLinejoin="round"><path d="M8 1.200L10.100 5.700L15 6.300L11.400 9.700L12.300 14.800L8 12.300L3.700 14.800L4.600 9.700L1 6.300L5.900 5.700Z" /></svg>
              </IconSlot>
            </UrlBar>
            <IconSlot $w={16} $ml={126}>
              <svg width="16" height="14" viewBox="0 0 16 14" stroke={gray} fill="none"><path d="M1.500 0V14M5 2V14M8.500 1V14M10.800 1L15.200 13.500" strokeWidth="1.800" /></svg>
            </IconSlot>
            <IconSlot $w={16} $ml={15}>
              <svg width="16" height="14" viewBox="0 0 16 14" stroke={gray} fill="none"><rect x="1" y="1" width="14" height="12" rx="2" strokeWidth="2" /><path d="M7.700 1V13" strokeWidth="1.300" /><path d="M3 4H6M3 6.300H6M3.500 8.600H6" strokeWidth="1.100" /></svg>
            </IconSlot>
            <IconSlot $w={20} $ml={15}>
              <svg width="20" height="20" viewBox="0 0 20 20"><circle cx="9" cy="10.500" r="6.500" fill="none" stroke={gray} strokeWidth="1.200" /><circle cx="9" cy="8.500" r="3" fill={gray} /><path d="M4.200 13.500Q6 11.500 9 12.500Q12 11.500 13.800 13.500Q12 16 9 16Q6 16 4.200 13.500Z" fill={gray} /><circle cx="17" cy="3.500" r="3" fill="#00aef5" /></svg>
            </IconSlot>
            <IconSlot $w={16} $ml={13}>
              <svg width="16" height="16" viewBox="0 0 16 16">
                <rect width="16" height="16" fill="#de4034" />
                <g transform="rotate(90 8 8)"><ReactAtom stroke="#fff" sw={0.9} /></g>
                <path d="M7 7L12 7L13.500 11L11 13.500L8 12.500L6.500 9.500Z" fill="#3a1a18" opacity="0.9" />
              </svg>
            </IconSlot>
            <IconSlot $w={23}><Rule $h={34} /></IconSlot>
            <IconSlot $w={12} $ml={4}>
              <svg width="12" height="12" viewBox="0 0 12 12"><path d="M0 1H12M0 6H12M0 11H12" stroke="#4c4b49" strokeWidth="1.900" /></svg>
            </IconSlot>
          </Toolbar>

          <Viewport>
            <Page>
              <AppBar>
                <NavLink $mr={23.5}>EXPENSE MANAGER</NavLink>
                <NavLink $mr={23}>EXPENSES</NavLink>
                <AddButton>
                  <svg width="22" height="22" viewBox="0 0 24 24" fill="#212121"><path d="M19 13h-6v6h-2v-6H5v-2h6V5h2v6h6v2z" /></svg>
                  ADD EXPENSES
                </AddButton>
                <NavLink>REPORT</NavLink>
                <NavLink $ml="auto">LOGOUT</NavLink>
              </AppBar>
              <Report>
                <PieChart />
                <Divider />
                <YearRow>
                  <Heading>Monthly Expenitures in</Heading>
                  <YearField>2020</YearField>
                </YearRow>
                <MonthlyChart />
              </Report>
            </Page>
            <ScrollTrack><ScrollThumb /></ScrollTrack>
          </Viewport>
        </Browser>
      </Workspace>
    </Desktop>
  );
}
